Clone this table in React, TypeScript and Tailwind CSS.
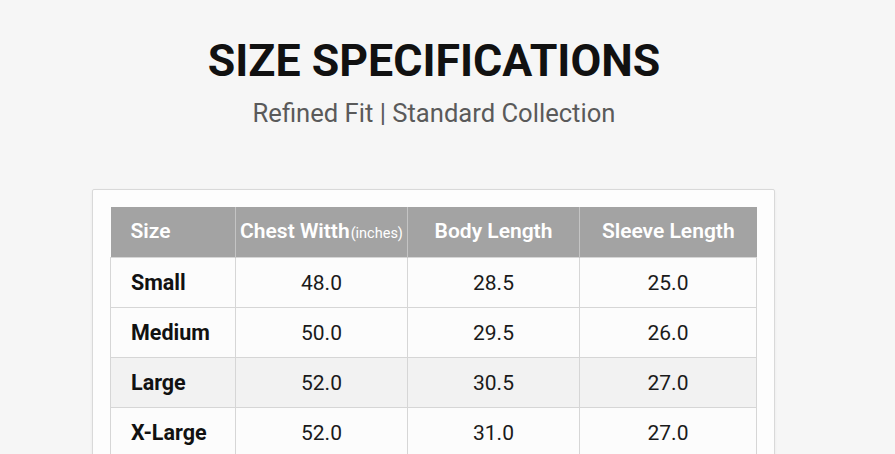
const rows = [
  { size: "Small", chest: "48.0", body: "28.5", sleeve: "25.0" },
  { size: "Medium", chest: "50.0", body: "29.5", sleeve: "26.0" },
  { size: "Large", chest: "52.0", body: "30.5", sleeve: "27.0" },
  { size: "X-Large", chest: "52.0", body: "31.0", sleeve: "27.0" },
];

export default function App() {
  return (
    <div className="h-[454px] w-[895px] overflow-hidden bg-[#f6f6f6] font-['Roboto',sans-serif]">
      <div className="w-[868px] pt-[37px]">
        <h1 className="text-center text-[44.7px] font-bold leading-[48px] text-[#111]">
          SIZE SPECIFICATIONS
        </h1>
        <p className="mt-[13px] text-center text-[25.6px] leading-[30px] text-[#5a5a5a]">
          Refined Fit | Standard Collection
        </p>

        <div className="ml-[92px] mt-[61px] w-[683px] rounded-[2px] border border-[#d9d9d9] bg-[#fdfdfd] px-[17px] pt-[17px] shadow-[0_1px_3px_rgba(0,0,0,0.06)]">
          <table className="w-[646px] table-fixed border-collapse">
            <colgroup>
              <col className="w-[125px]" />
              <col className="w-[172px]" />
              <col className="w-[172px]" />
              <col className="w-[177px]" />
            </colgroup>
            <thead>
              <tr className="h-[50px] bg-[#a3a3a3] text-white">
                <th className="border-r border-[#c4c4c4] pl-[20px] text-left text-[21px] font-semibold">Size</th>
                <th className="whitespace-nowrap border-r border-[#c4c4c4] text-center text-[21px] font-semibold">
                  Chest Witth<span className="ml-[1px] text-[14.5px] font-normal">(inches)</span>
                </th>
                <th className="border-r border-[#c4c4c4] text-center text-[21px] font-semibold">Body Length</th>
                <th className="text-center text-[21px] font-semibold">Sleeve Length</th>
              </tr>
            </thead>
            <tbody>
              {rows.map((r, i) => (
                <tr key={r.size} className={i === 2 ? "h-[50px] bg-[#f2f2f2]" : "h-[50px] bg-[#fcfcfc]"}>
                  <td className="border border-[#d6d6d6] pl-[20px] pt-[3px] text-[21.5px] font-bold text-[#111]">{r.size}</td>
                  <td className="border border-[#d6d6d6] pt-[3px] text-center text-[21px] text-[#1a1a1a]">{r.chest}</td>
                  <td className="border border-[#d6d6d6] pt-[3px] text-center text-[21px] text-[#1a1a1a]">{r.body}</td>
                  <td className="border border-[#d6d6d6] pt-[3px] text-center text-[21px] text-[#1a1a1a]">{r.sleeve}</td>
                </tr>
              ))}
            </tbody>
          </table>
        </div>
      </div>
    </div>
  );
}
